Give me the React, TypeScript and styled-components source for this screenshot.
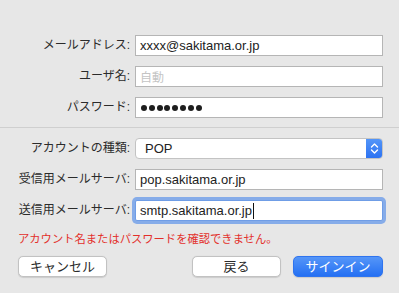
import styled, { createGlobalStyle } from "styled-components";

const GlobalStyle = createGlobalStyle`
  html, body {
    margin: 0;
    padding: 0;
    background: #e7e7e7;
  }
  body {
    font-family: "Liberation Sans", "Noto Sans CJK JP", sans-serif;
    color: #262626;
  }
`;

const Sheet = styled.div`
  width: 399px;
  height: 293px;
  background: #e7e7e7;
  padding-top: 35px;
  box-sizing: border-box;
  overflow: hidden;
`;

const Section = styled.div<{ $pt?: number }>`
  display: flex;
  flex-direction: column;
  gap: 10px;
  padding-top: ${(p) => p.$pt ?? 0}px;
`;

const Separator = styled.div`
  height: 1px;
  background: #cfcfcf;
  margin-top: 9px;
`;

const Row = styled.div`
  display: grid;
  grid-template-columns: 130px 248px;
  column-gap: 5px;
  align-items: center;
  height: 21px;
`;

const Label = styled.label`
  text-align: right;
  font-size: 12px;
  line-height: 21px;
  color: #2b2b2b;
  white-space: nowrap;
`;

const Field = styled.div<{ $focused?: boolean }>`
  height: 21px;
  box-sizing: border-box;
  background: #fff;
  border: 1px solid ${(p) => (p.$focused ? "#6f9de6" : "#b5b5b5")};
  box-shadow: ${(p) => (p.$focused ? "0 0 0 3px #86ace9" : "none")};
  border-radius: ${(p) => (p.$focused ? "2px" : "0")};
  display: flex;
  align-items: center;
  padding-left: 4px;
  font-size: 13px;
  color: #222;
  white-space: nowrap;
`;

const Placeholder = styled.span`
  color: #c4c4c4;
  font-size: 12px;
`;

const Caret = styled.span`
  display: inline-block;
  width: 1px;
  height: 16px;
  background: #111;
  margin-left: 1px;
`;

const Dots = styled.div`
  display: flex;
  gap: 1.8px;
  padding-left: 1px;
`;

const Dot = styled.span`
  width: 6px;
  height: 6px;
  border-radius: 50%;
  background: #1e1e1e;
`;

const Select = styled.div`
  height: 21px;
  box-sizing: border-box;
  background: #fff;
  border: 1px solid #c3c3c3;
  border-radius: 4px;
  display: flex;
  align-items: center;
  justify-content: space-between;
  font-size: 13px;
  color: #222;
  padding-left: 9px;
  overflow: hidden;
`;

const Stepper = styled.div`
  width: 17px;
  height: 21px;
  margin: -1px -1px -1px 0;
  background: linear-gradient(#5597f8, #2b71f2);
  border-radius: 0 4px 4px 0;
  display: flex;
  align-items: center;
  justify-content: center;
`;

const ErrorText = styled.div`
  margin-top: 11px;
  padding-left: 18px;
  font-size: 11.3px;
  line-height: 14px;
  color: #e3302b;
`;

const Footer = styled.div`
  display: flex;
  justify-content: space-between;
  padding: 10px 16px 0 18px;
`;

const Group = styled.div`
  display: flex;
  gap: 12px;
`;

const Button = styled.button<{ $primary?: boolean; $w?: number }>`
  width: ${(p) => p.$w ?? 89}px;
  height: 21px;
  box-sizing: border-box;
  border-radius: 5px;
  font-family: "Liberation Sans", "Noto Sans CJK JP", sans-serif;
  font-size: 13px;
  line-height: 19px;
  padding: 0;
  border: 1px solid ${(p) => (p.$primary ? "#2f74ef" : "#c2c2c2")};
  background: ${(p) => (p.$primary ? "linear-gradient(#5596f8, #2570f3)" : "#fff")};
  color: ${(p) => (p.$primary ? "#fff" : "#2b2b2b")};
  box-shadow: 0 0.5px 1px rgba(0, 0, 0, 0.12);
`;

export default function App() {
  return (
    <>
      <GlobalStyle />
      <Sheet>
        <Section>
          <Row>
            <Label>メールアドレス:</Label>
            <Field>xxxx@sakitama.or.jp</Field>
          </Row>
          <Row>
            <Label>ユーザ名:</Label>
            <Field>
              <Placeholder>自動</Placeholder>
            </Field>
          </Row>
          <Row>
            <Label>パスワード:</Label>
            <Field>
              <Dots>
                {Array.from({ length: 8 }).map((_, i) => (
                  <Dot key={i} />
                ))}
              </Dots>
            </Field>
          </Row>
        </Section>
        <Separator />
        <Section $pt={10}>
          <Row>
            <Label>アカウントの種類:</Label>
            <Select>
              POP
              <Stepper>
                <svg width="9" height="13" viewBox="0 0 9 13" fill="none">
                  <path d="M1.5 5 L4.5 2 L7.5 5" stroke="#fff" strokeWidth="1.4" strokeLinecap="round" strokeLinejoin="round" />
                  <path d="M1.5 8 L4.5 11 L7.5 8" stroke="#fff" strokeWidth="1.4" strokeLinecap="round" strokeLinejoin="round" />
                </svg>
              </Stepper>
            </Select>
          </Row>
          <Row>
            <Label>受信用メールサーバ:</Label>
            <Field>pop.sakitama.or.jp</Field>
          </Row>
          <Row>
            <Label>送信用メールサーバ:</Label>
            <Field $focused>
              smtp.sakitama.or.jp
              <Caret />
            </Field>
          </Row>
        </Section>
        <ErrorText>アカウント名またはパスワードを確認できません。</ErrorText>
        <Footer>
          <Button>キャンセル</Button>
          <Group>
            <Button>戻る</Button>
            <Button $primary $w={90}>
              サインイン
            </Button>
          </Group>
        </Footer>
      </Sheet>
    </>
  );
}
